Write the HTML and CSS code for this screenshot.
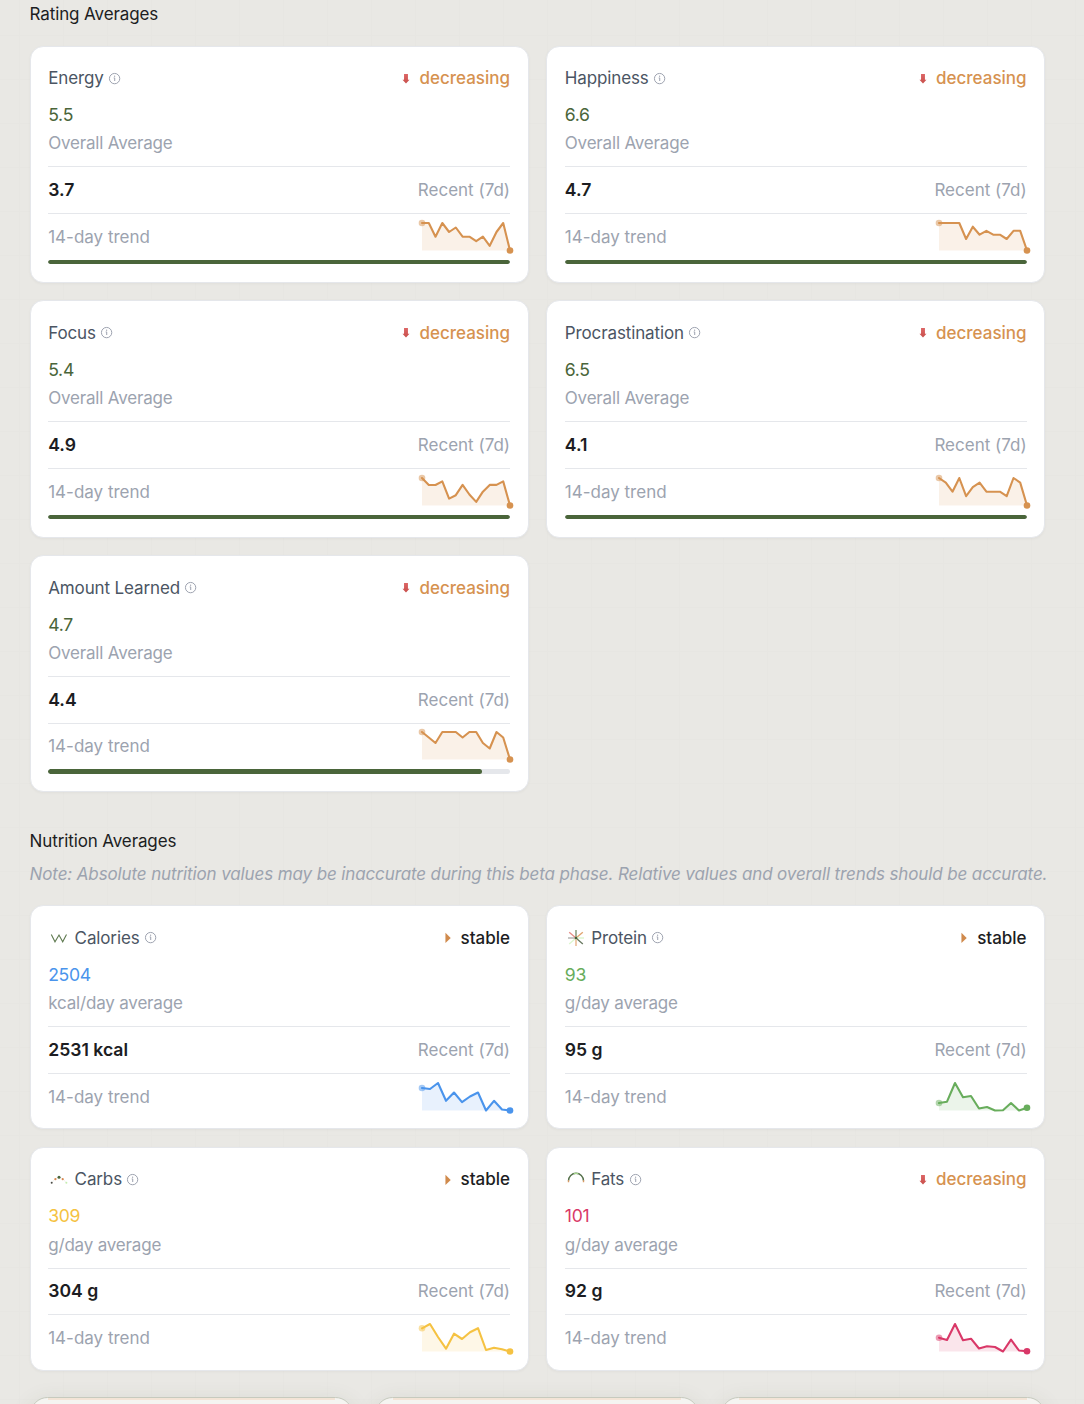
FILE: index.html
```html
<!DOCTYPE html>
<html lang="en">

<head>
    <meta charset="UTF-8">
    <meta name="viewport" content="width=device-width, initial-scale=1.0">
    <title>Averages</title>
    <link rel="stylesheet" href="styles.css">
</head>

<body>
    <!-- Shared icons -->
    <svg class="sprite" xmlns="http://www.w3.org/2000/svg">
        <linearGradient id="redFade" x1="0" y1="0" x2="0" y2="1">
            <stop offset="0" stop-color="#dd6666" />
            <stop offset="1" stop-color="#c84f4b" />
        </linearGradient>
        <symbol id="info" viewBox="0 0 12 12">
            <circle cx="6" cy="6" r="4.7" fill="none" stroke="#9ca1ae" stroke-width="0.9" />
            <path d="M5.2 5.4H6.1V8.2" fill="none" stroke="#9ca1ae" stroke-width="0.9" />
            <circle cx="6" cy="3.8" r="0.6" fill="#9ca1ae" />
        </symbol>
        <symbol id="down" viewBox="0 0 18 18">
            <path d="M7.2 4H11.2V10.1H12.8L9.2 13.8L5.6 10.1H7.2Z" fill="url(#redFade)" />
        </symbol>
        <symbol id="right" viewBox="0 0 18 18">
            <path d="M6.6 3.8L12 9.2L6.6 14.4Z" fill="#d08a4c" />
        </symbol>
    </svg>

    <main class="page">
        <section class="ratings">
            <h2>Rating Averages</h2>
            <div class="grid">
                <div class="card">
                    <div class="card-head">
                        <span class="name">Energy <svg class="info"><use href="#info" /></svg></span>
                        <span class="trend decreasing"><svg><use href="#down" /></svg>decreasing</span>
                    </div>
                    <div class="value green">5.5</div>
                    <div class="muted">Overall Average</div>
                    <div class="row"><strong>3.7</strong><span class="muted">Recent (7d)</span></div>
                    <div class="row">
                        <span class="muted">14-day trend</span>
                        <svg class="spark orange" viewBox="0 0 88 28">
                            <polygon points="0,27.5 0,0 6.8,0 13.5,13.7 20.3,0 27.1,9 33.8,4.5 40.6,13.7 47.4,13.7 54.2,18.2 60.9,13.7 67.7,22.8 74.5,9 81.2,0 88,27.5" />
                            <polyline points="0,0 6.8,0 13.5,13.7 20.3,0 27.1,9 33.8,4.5 40.6,13.7 47.4,13.7 54.2,18.2 60.9,13.7 67.7,22.8 74.5,9 81.2,0 88,27.5" />
                            <circle class="start" cx="0" cy="0" r="3.3" />
                            <circle cx="88" cy="27.5" r="3.3" />
                        </svg>
                    </div>
                    <div class="bar"><div class="fill" style="width: 100%"></div></div>
                </div>

                <div class="card">
                    <div class="card-head">
                        <span class="name">Happiness <svg class="info"><use href="#info" /></svg></span>
                        <span class="trend decreasing"><svg><use href="#down" /></svg>decreasing</span>
                    </div>
                    <div class="value green">6.6</div>
                    <div class="muted">Overall Average</div>
                    <div class="row"><strong>4.7</strong><span class="muted">Recent (7d)</span></div>
                    <div class="row">
                        <span class="muted">14-day trend</span>
                        <svg class="spark orange" viewBox="0 0 88 28">
                            <polygon points="0,27.5 0,0 6.8,0 13.5,0 20.3,0 27.1,16 33.8,3.7 40.6,11.7 47.4,7.8 54.2,11.7 60.9,11.7 67.7,16 74.5,7.8 81.2,7.8 88,27.5" />
                            <polyline points="0,0 6.8,0 13.5,0 20.3,0 27.1,16 33.8,3.7 40.6,11.7 47.4,7.8 54.2,11.7 60.9,11.7 67.7,16 74.5,7.8 81.2,7.8 88,27.5" />
                            <circle class="start" cx="0" cy="0" r="3.3" />
                            <circle cx="88" cy="27.5" r="3.3" />
                        </svg>
                    </div>
                    <div class="bar"><div class="fill" style="width: 100%"></div></div>
                </div>

                <div class="card">
                    <div class="card-head">
                        <span class="name">Focus <svg class="info"><use href="#info" /></svg></span>
                        <span class="trend decreasing"><svg><use href="#down" /></svg>decreasing</span>
                    </div>
                    <div class="value green">5.4</div>
                    <div class="muted">Overall Average</div>
                    <div class="row"><strong>4.9</strong><span class="muted">Recent (7d)</span></div>
                    <div class="row">
                        <span class="muted">14-day trend</span>
                        <svg class="spark orange" viewBox="0 0 88 28">
                            <polygon points="0,27.5 0,0 6.8,7 13.5,7 20.3,3.4 27.1,20.6 33.8,17.2 40.6,6.9 47.4,16.5 54.2,23.9 60.9,13.7 67.7,6.9 74.5,6.9 81.2,3.4 88,27.5" />
                            <polyline points="0,0 6.8,7 13.5,7 20.3,3.4 27.1,20.6 33.8,17.2 40.6,6.9 47.4,16.5 54.2,23.9 60.9,13.7 67.7,6.9 74.5,6.9 81.2,3.4 88,27.5" />
                            <circle class="start" cx="0" cy="0" r="3.3" />
                            <circle cx="88" cy="27.5" r="3.3" />
                        </svg>
                    </div>
                    <div class="bar"><div class="fill" style="width: 100%"></div></div>
                </div>

                <div class="card">
                    <div class="card-head">
                        <span class="name">Procrastination <svg class="info"><use href="#info" /></svg></span>
                        <span class="trend decreasing"><svg><use href="#down" /></svg>decreasing</span>
                    </div>
                    <div class="value green">6.5</div>
                    <div class="muted">Overall Average</div>
                    <div class="row"><strong>4.1</strong><span class="muted">Recent (7d)</span></div>
                    <div class="row">
                        <span class="muted">14-day trend</span>
                        <svg class="spark orange" viewBox="0 0 88 28">
                            <polygon points="0,27.5 0,0 6.8,4.6 13.5,13.7 20.3,0 27.1,18.2 33.8,9.2 40.6,4.6 47.4,13.7 54.2,13.7 60.9,13.7 67.7,18.2 74.5,0 81.2,4.6 88,27.5" />
                            <polyline points="0,0 6.8,4.6 13.5,13.7 20.3,0 27.1,18.2 33.8,9.2 40.6,4.6 47.4,13.7 54.2,13.7 60.9,13.7 67.7,18.2 74.5,0 81.2,4.6 88,27.5" />
                            <circle class="start" cx="0" cy="0" r="3.3" />
                            <circle cx="88" cy="27.5" r="3.3" />
                        </svg>
                    </div>
                    <div class="bar"><div class="fill" style="width: 100%"></div></div>
                </div>

                <div class="card">
                    <div class="card-head">
                        <span class="name">Amount Learned <svg class="info"><use href="#info" /></svg></span>
                        <span class="trend decreasing"><svg><use href="#down" /></svg>decreasing</span>
                    </div>
                    <div class="value green">4.7</div>
                    <div class="muted">Overall Average</div>
                    <div class="row"><strong>4.4</strong><span class="muted">Recent (7d)</span></div>
                    <div class="row">
                        <span class="muted">14-day trend</span>
                        <svg class="spark orange" viewBox="0 0 88 28">
                            <polygon points="0,27.5 0,0 6.8,5.5 13.5,11 20.3,0 27.1,0 33.8,0 40.6,5.5 47.4,0 54.2,0 60.9,11 67.7,16.5 74.5,0 81.2,5.5 88,27.5" />
                            <polyline points="0,0 6.8,5.5 13.5,11 20.3,0 27.1,0 33.8,0 40.6,5.5 47.4,0 54.2,0 60.9,11 67.7,16.5 74.5,0 81.2,5.5 88,27.5" />
                            <circle class="start" cx="0" cy="0" r="3.3" />
                            <circle cx="88" cy="27.5" r="3.3" />
                        </svg>
                    </div>
                    <div class="bar"><div class="fill" style="width: 94%"></div></div>
                </div>
            </div>
        </section>

        <section class="nutrition">
            <h2>Nutrition Averages</h2>
            <p class="note">Note: Absolute nutrition values may be inaccurate during this beta phase. Relative values and overall trends should be accurate.</p>
            <div class="grid">
                <div class="card">
                    <div class="card-head">
                        <span class="name">
                            <svg class="icon" viewBox="0 0 22 22">
                                <path d="M3.3 7.4L7 14.8L11 8L14.7 14.8L18.5 7.4" fill="none" stroke="#5f7a50" stroke-width="1.1" />
                            </svg>
                            Calories <svg class="info"><use href="#info" /></svg>
                        </span>
                        <span class="trend stable"><svg><use href="#right" /></svg>stable</span>
                    </div>
                    <div class="value blue">2504</div>
                    <div class="muted">kcal/day average</div>
                    <div class="row"><strong>2531 kcal</strong><span class="muted">Recent (7d)</span></div>
                    <div class="row">
                        <span class="muted">14-day trend</span>
                        <svg class="spark blue" viewBox="0 0 88 28">
                            <polygon points="0,27.5 0,5 8,6 16,0 24,17.8 32,9.5 40,19.2 48,13.5 56,9.5 64,27.5 72,17.8 80,26.5 88,27.5" />
                            <polyline points="0,5 8,6 16,0 24,17.8 32,9.5 40,19.2 48,13.5 56,9.5 64,27.5 72,17.8 80,26.5 88,27.5" />
                            <circle class="start" cx="0" cy="5" r="3.3" />
                            <circle cx="88" cy="27.5" r="3.3" />
                        </svg>
                    </div>
                </div>

                <div class="card">
                    <div class="card-head">
                        <span class="name">
                            <svg class="icon" viewBox="0 0 22 22" fill="none" stroke-width="1.3">
                                <path d="M11 11V3" stroke="#8fa084" stroke-width="1.6" />
                                <path d="M11 11L17.8 5.2" stroke="#e0a46e" />
                                <path d="M11 11H19" stroke="#d9f5c8" />
                                <path d="M11 11L17.8 17" stroke="#68785f" />
                                <path d="M11 11V19" stroke="#edc5a2" stroke-width="1.8" />
                                <path d="M11 11L4.2 17" stroke="#dcf6cd" />
                                <path d="M11 11H3" stroke="#bbb9b7" stroke-width="1.6" />
                                <path d="M11 11L4.2 5.2" stroke="#e48c85" />
                                <circle cx="11" cy="11" r="1.3" fill="#456039" />
                            </svg>
                            Protein <svg class="info"><use href="#info" /></svg>
                        </span>
                        <span class="trend stable"><svg><use href="#right" /></svg>stable</span>
                    </div>
                    <div class="value lime">93</div>
                    <div class="muted">g/day average</div>
                    <div class="row"><strong>95 g</strong><span class="muted">Recent (7d)</span></div>
                    <div class="row">
                        <span class="muted">14-day trend</span>
                        <svg class="spark lime" viewBox="0 0 88 28">
                            <polygon points="0,27.5 0,20 8,18.7 16,0 24,14.3 32,13 40,25.5 48,24 56,27.5 64,27.2 72,20 80,27.5 88,24.7 88,27.5" />
                            <polyline points="0,20 8,18.7 16,0 24,14.3 32,13 40,25.5 48,24 56,27.5 64,27.2 72,20 80,27.5 88,24.7" />
                            <circle class="start" cx="0" cy="20" r="3.3" />
                            <circle cx="88" cy="24.7" r="3.3" />
                        </svg>
                    </div>
                </div>

                <div class="card">
                    <div class="card-head">
                        <span class="name">
                            <svg class="icon" viewBox="0 0 22 22">
                                <path d="M3.5 14Q11 2.5 18.5 14" fill="none" stroke="#e8e6e2" stroke-width="0.6" />
                                <circle cx="3.7" cy="13.8" r="1" fill="#4a4b45" />
                                <circle cx="7.4" cy="10.2" r="1.1" fill="#d98850" />
                                <circle cx="11" cy="8.2" r="1.5" fill="#4a6539" />
                                <circle cx="14.7" cy="10.2" r="1.1" fill="#d98850" />
                                <circle cx="18.4" cy="13.8" r="1" fill="#c5eeb0" />
                            </svg>
                            Carbs <svg class="info"><use href="#info" /></svg>
                        </span>
                        <span class="trend stable"><svg><use href="#right" /></svg>stable</span>
                    </div>
                    <div class="value yellow">309</div>
                    <div class="muted">g/day average</div>
                    <div class="row"><strong>304 g</strong><span class="muted">Recent (7d)</span></div>
                    <div class="row">
                        <span class="muted">14-day trend</span>
                        <svg class="spark yellow" viewBox="0 0 88 28">
                            <polygon points="0,27.5 0,4.3 8,0 16,13 24,24.7 32,9.7 40,15 48,8.3 56,4.2 64,26 72,23.7 80,25.2 88,27.5" />
                            <polyline points="0,4.3 8,0 16,13 24,24.7 32,9.7 40,15 48,8.3 56,4.2 64,26 72,23.7 80,25.2 88,27.5" />
                            <circle class="start" cx="0" cy="4.3" r="3.3" />
                            <circle cx="88" cy="27.5" r="3.3" />
                        </svg>
                    </div>
                </div>

                <div class="card">
                    <div class="card-head">
                        <span class="name">
                            <svg class="icon" viewBox="0 0 22 22" fill="none" stroke-width="1.4">
                                <path d="M3.5 11.8A7.5 7.5 0 0 1 18.5 11.8" stroke="#54704a" />
                                <path d="M8.8 4.7Q11 4 13.2 4.7" stroke="#a5d68c" />
                                <path d="M3.5 13.2V11.2M18.5 13.2V11.2" stroke="#d99a64" />
                            </svg>
                            Fats <svg class="info"><use href="#info" /></svg>
                        </span>
                        <span class="trend decreasing"><svg><use href="#down" /></svg>decreasing</span>
                    </div>
                    <div class="value pink">101</div>
                    <div class="muted">g/day average</div>
                    <div class="row"><strong>92 g</strong><span class="muted">Recent (7d)</span></div>
                    <div class="row">
                        <span class="muted">14-day trend</span>
                        <svg class="spark pink" viewBox="0 0 88 28">
                            <polygon points="0,27.5 0,13.7 8,16 16,0 24,16.3 32,14.7 40,24.5 48,22.3 56,23 64,27.5 72,15.7 80,26.5 88,27.3" />
                            <polyline points="0,13.7 8,16 16,0 24,16.3 32,14.7 40,24.5 48,22.3 56,23 64,27.5 72,15.7 80,26.5 88,27.3" />
                            <circle class="start" cx="0" cy="13.7" r="3.3" />
                            <circle cx="88" cy="27.3" r="3.3" />
                        </svg>
                    </div>
                </div>
            </div>
        </section>

        <div class="panels">
            <div class="panel"></div>
            <div class="panel"></div>
            <div class="panel"></div>
        </div>
    </main>
</body>

</html>
```
FILE: styles.css
```css
html {
    font-size: 17.6px;
}

body {
    margin: 0;
    height: 1404px;
    overflow: hidden;
    font-family: Inter, "Liberation Sans", sans-serif;
    font-size: 17px;
    line-height: 1.6rem;
    letter-spacing: -0.12px;
    color: #1c1d22;
    background-color: #e9e8e4;
    background-image:
        linear-gradient(to right, #e7e6e2 1px, transparent 1px),
        linear-gradient(to bottom, #e7e6e2 1px, transparent 1px);
    background-size: 44px 44px;
    background-position: 19px 35px;
}

.sprite {
    position: absolute;
    width: 0;
    height: 0;
}

.page {
    padding: 0 38.8px 0 29.6px;
}

h2 {
    margin: 0;
    font-size: 17px;
    font-weight: 400;
}

.ratings h2 {
    margin-bottom: 17.5px;
}

.nutrition {
    margin-top: 2rem;
}

.note {
    margin: 0.25rem 0 17.2px;
    font-style: italic;
    color: #9ca3af;
    white-space: nowrap;
}

.grid {
    display: grid;
    grid-template-columns: 1fr 1fr;
    gap: 1rem;
}

.card {
    background: white;
    border: 1px solid #e5e7eb;
    border-radius: 13.2px;
    padding: 1rem;
    box-shadow: 0 1px 3px rgba(0, 0, 0, 0.04);
}

.card-head {
    display: flex;
    justify-content: space-between;
    align-items: center;
    height: 1.6rem;
    margin-bottom: 0.5rem;
}

.name {
    display: flex;
    align-items: center;
    gap: 0.25rem;
    color: #4b5563;
}

.icon {
    width: 22px;
    height: 22px;
}

.info {
    width: 13.2px;
    height: 13.2px;
}

.trend {
    display: flex;
    align-items: center;
    gap: 0.25rem;
    font-weight: 500;
    letter-spacing: 0;
}

.trend svg {
    width: 1rem;
    height: 1rem;
}

.decreasing {
    color: #d69250;
}

.value {
    font-size: 1rem;
    letter-spacing: -0.3px;
}

.muted {
    color: #9ca3af;
    letter-spacing: -0.18px;
}

.row {
    display: flex;
    justify-content: space-between;
    align-items: center;
    height: 1.6rem;
    margin-top: 0.5rem;
    padding-top: 0.5rem;
    border-top: 1px solid #e5e7eb;
}

.row .muted {
    letter-spacing: 0;
}

.row strong {
    font-size: 1rem;
    font-weight: 600;
    letter-spacing: 0;
}

.spark {
    width: 88px;
    height: 28px;
    overflow: visible;
    color: #d69250;
}

.spark polygon {
    fill: currentColor;
    opacity: 0.13;
}

.spark polyline {
    fill: none;
    stroke: currentColor;
    stroke-width: 2.1;
    stroke-linejoin: round;
    stroke-linecap: round;
}

.spark circle {
    fill: currentColor;
}

.spark .start {
    opacity: 0.5;
}

.green {
    color: #4a653a;
}

.blue {
    color: #4a94ec;
}

.lime {
    color: #68ad5c;
}

.yellow {
    color: #f5c242;
}

.pink {
    color: #d93868;
}

.bar {
    height: 4.4px;
    margin-top: 0.5rem;
    border-radius: 3px;
    background: #e5e7eb;
    overflow: hidden;
}

.fill {
    height: 100%;
    border-radius: 3px;
    background: #4a653a;
}

.panels {
    display: grid;
    grid-template-columns: repeat(3, 1fr);
    gap: 1.25rem;
    margin-top: 1.5rem;
}

.panel {
    height: 200px;
    border: 1px solid #c6cabe;
    border-radius: 17.6px;
    background: linear-gradient(to right, transparent 17px, #f3e4d6 17px, #f3e4d6 calc(100% - 17px), transparent calc(100% - 17px)) top / 100% 2px no-repeat #f5f4f1;
    box-shadow: 0 4px 22px rgba(70, 80, 50, 0.1);
}
```
